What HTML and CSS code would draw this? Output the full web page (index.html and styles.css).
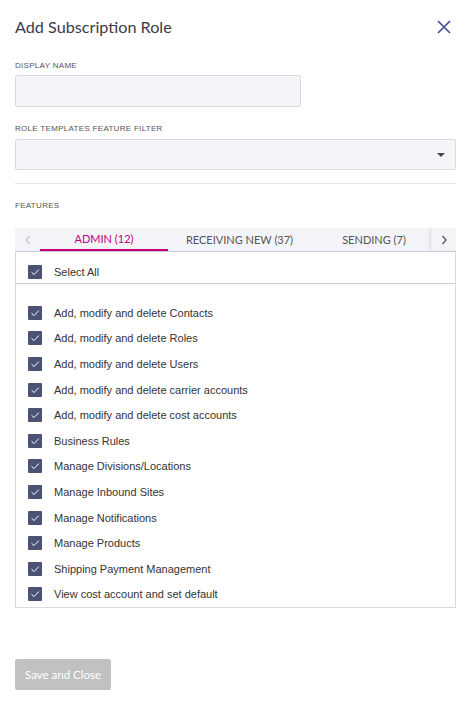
FILE: index.html
```html
<!DOCTYPE html>
<html>
<head>
<meta charset="utf-8">
<link rel="stylesheet" href="styles.css">
</head>
<body>
<div class="dialog">
  <header class="header">
    <h1 class="title">Add Subscription Role</h1>
    <svg class="close" width="14" height="14" viewBox="0 0 14 14"><path d="M1 1 L13 13 M13 1 L1 13" stroke="#3d4d9c" stroke-width="1.6" fill="none"/></svg>
  </header>

  <div class="field-label first">DISPLAY NAME</div>
  <div class="input"></div>

  <div class="field-label second">ROLE TEMPLATES FEATURE FILTER</div>
  <div class="select"><span class="caret"></span></div>

  <div class="divider"></div>

  <div class="field-label third">FEATURES</div>

  <div class="tabbar">
    <div class="arrow left"><svg width="8" height="10" viewBox="0 0 8 10"><path d="M5.5 1 L2 5 L5.5 9" stroke="#c4c4c8" stroke-width="1.3" fill="none"/></svg></div>
    <div class="tabs">
      <div class="tab active t1">ADMIN (12)</div>
      <div class="tab t2">RECEIVING NEW (37)</div>
      <div class="tab t3">SENDING (7)</div>
    </div>
    <div class="arrow right"><svg width="8" height="10" viewBox="0 0 8 10"><path d="M2.5 1 L6 5 L2.5 9" stroke="#555" stroke-width="1.3" fill="none"/></svg></div>
  </div>

  <div class="box">
    <div class="row select-all"><span class="cb"></span><span>Select All</span></div>
    <div class="list">
      <div class="row"><span class="cb"></span><span>Add, modify and delete Contacts</span></div>
      <div class="row"><span class="cb"></span><span>Add, modify and delete Roles</span></div>
      <div class="row"><span class="cb"></span><span>Add, modify and delete Users</span></div>
      <div class="row"><span class="cb"></span><span>Add, modify and delete carrier accounts</span></div>
      <div class="row"><span class="cb"></span><span>Add, modify and delete cost accounts</span></div>
      <div class="row"><span class="cb"></span><span>Business Rules</span></div>
      <div class="row"><span class="cb"></span><span>Manage Divisions/Locations</span></div>
      <div class="row"><span class="cb"></span><span>Manage Inbound Sites</span></div>
      <div class="row"><span class="cb"></span><span>Manage Notifications</span></div>
      <div class="row"><span class="cb"></span><span>Manage Products</span></div>
      <div class="row"><span class="cb"></span><span>Shipping Payment Management</span></div>
      <div class="row"><span class="cb"></span><span>View cost account and set default</span></div>
    </div>
  </div>

  <button class="save">Save and Close</button>
</div>
</body>
</html>
```

FILE: styles.css
```css
* { box-sizing: border-box; }
html, body { margin: 0; padding: 0; background: #fff; }
body { font-family: "Liberation Sans", Arial, sans-serif; }

.dialog { padding: 0 17px 0 15px; width: 473px; }

.header {
  display: flex;
  justify-content: space-between;
  align-items: center;
  height: 26px;
  margin-top: 14px;
}
.title {
  margin: 0;
  font-family: Lato, "Open Sans", sans-serif;
  font-weight: 400;
  font-size: 16.2px;
  line-height: 26px;
  color: #3a3a48;
}
.close { margin-right: 5px; }

.field-label {
  font-size: 8px;
  line-height: 10px;
  color: #555;
  letter-spacing: 0.3px;
}
.field-label.first { margin-top: 21px; }
.field-label.second { margin-top: 17px; }
.field-label.third { margin-top: 17px; }

.input {
  margin-top: 4px;
  width: 286px;
  height: 32px;
  background: #f4f5f9;
  border: 1px solid #d9dbe3;
  border-radius: 2px;
}
.select {
  margin-top: 5px;
  height: 31px;
  background: #f4f5f9;
  border: 1px solid #d9dbe3;
  border-radius: 2px;
  display: flex;
  justify-content: flex-end;
  align-items: center;
  padding-right: 10px;
}
.caret {
  width: 0; height: 0;
  border-left: 4px solid transparent;
  border-right: 4px solid transparent;
  border-top: 4px solid #444;
}
.divider {
  margin-top: 13px;
  height: 1px;
  background: #e3e4e9;
}

.tabbar {
  margin-top: 17px;
  height: 24px;
  background: #f3f4f8;
  border-bottom: 1px solid #c9cad3;
  display: flex;
}
.arrow {
  display: flex;
  align-items: center;
  justify-content: center;
  flex: none;
}
.arrow.left { width: 25px; }
.arrow.right { width: 26px; border-left: 1px solid #dfe0e6; box-shadow: -2px 0 3px rgba(0,0,0,0.04); }
.tabs {
  flex: 1;
  display: flex;
  overflow: hidden;
}
.tab {
  flex: none;
  font-family: Lato, "Open Sans", sans-serif;
  font-size: 11px;
  color: #555;
  text-align: center;
  line-height: 23px;
  white-space: nowrap;
}
.tab.t1 { width: 128px; }
.tab.t2 { width: 143px; }
.tab.t3 { width: 126px; }
.tab.active {
  color: #c4007c;
  border-bottom: 2px solid #c4007c;
  line-height: 21px;
  height: 23px;
}

.box {
  border: 1px solid #d9dae2;
  border-top: none;
}
.row {
  display: flex;
  align-items: center;
  padding-left: 12px;
  font-size: 11px;
  color: #333;
}
.select-all {
  padding-top: 13px;
  padding-bottom: 4px;
  border-bottom: 1px solid #c9cad3;
}
.list { padding-top: 16px; }
.list .row { height: 25.6px; }
.cb {
  flex: none;
  width: 14px;
  height: 14px;
  margin-right: 12px;
  background-color: #4b5273;
  border-radius: 1px;
  background-image: url("data:image/svg+xml;utf8,<svg xmlns='http://www.w3.org/2000/svg' width='14' height='14' viewBox='0 0 14 14'><path d='M3.5 7.2 L6 9.6 L10.8 4.6' stroke='white' stroke-width='1' fill='none'/></svg>");
  background-repeat: no-repeat;
}

.save {
  margin-top: 51px;
  width: 96px;
  height: 31px;
  border: none;
  border-radius: 2px;
  background: #c1c1c1;
  color: #fff;
  font-family: Lato, "Open Sans", sans-serif;
  font-size: 11.5px;
  padding: 0;
  display: block;
}
```
